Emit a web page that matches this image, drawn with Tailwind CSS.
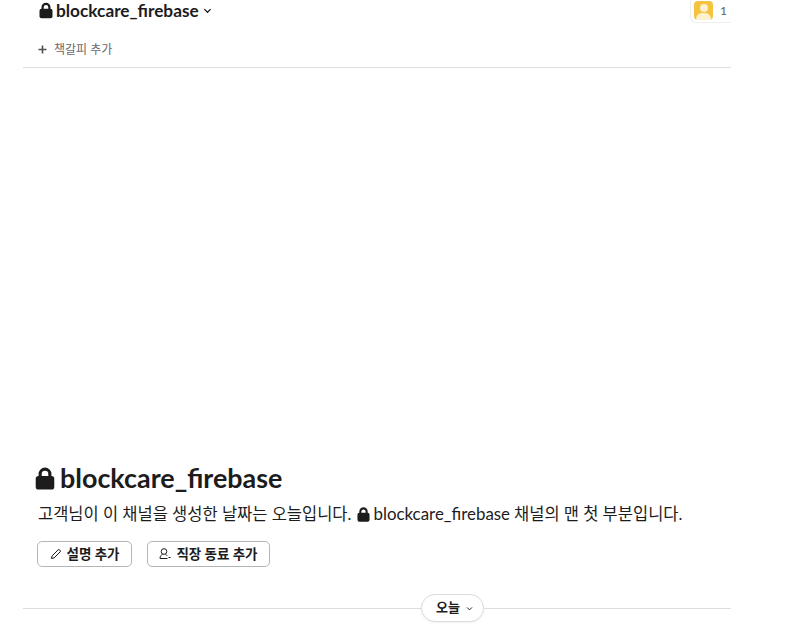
<!DOCTYPE html>
<html lang="ko">
<head>
    <meta charset="UTF-8">
    <title>blockcare_firebase</title>
    <script src="https://cdn.jsdelivr.net/npm/@tailwindcss/browser@4"></script>
</head>
<body class="bg-white h-[631px] overflow-hidden font-['Lato','Noto_Sans_CJK_KR',sans-serif] text-[#1d1c1d]">
    <div class="ml-[23px] w-[708px] h-[631px] flex flex-col">
        <!-- 채널 헤더 -->
        <div class="h-[23px] flex items-center justify-between pl-[16px]">
            <div class="flex items-center h-[21px] -mt-[2px]">
                <svg class="w-[14px] h-[17px] mr-[3px]" viewBox="0 0 14 16" fill="#1d1c1d">
                    <path d="M2.500 8V4.800a4.500 4.500 0 0 1 9 0V8H9.300V4.800a2.300 2.300 0 0 0-4.600 0V8z"/>
                    <rect x=".5" y="6.200" width="13" height="9.500" rx="2"/>
                </svg>
                <span class="text-[17.25px] leading-[21px] font-bold">blockcare_firebase</span>
                <svg class="w-[9px] h-[9px] ml-[4px]" viewBox="0 0 10 10" fill="none" stroke="#1d1c1d" stroke-width="1.400">
                    <path d="M1.500 3.500 5 7l3.500-3.500"/>
                </svg>
            </div>
            <div class="flex items-center h-[23px] pl-[3px] w-[41px] -mt-[1px] rounded-bl-[6px] border-l border-b border-[#efefef]">
                <div class="w-[19px] h-[19px] rounded-[4px] bg-[#f4c342] overflow-hidden flex flex-col items-center shrink-0">
                    <div class="w-[8px] h-[8px] rounded-full bg-[#fdf1d0] mt-[3px]"></div>
                    <div class="w-[15px] h-[8px] rounded-t-[6px] bg-[#fdf1d0] mt-[1px]"></div>
                </div>
                <span class="ml-[7px] text-[12px] text-[#616061]">1</span>
            </div>
        </div>
        <!-- 책갈피 바 -->
        <div class="h-[45px] flex items-center pl-[15px] border-b border-[#dddddd] pt-[9px]">
            <svg class="w-[9px] h-[9px] mr-[7px]" viewBox="0 0 9 9" fill="none" stroke="#505050" stroke-width="1.600">
                <path d="M4.500 .5v8M.5 4.500h8"/>
            </svg>
            <span class="text-[12px] leading-[16px] text-[#696969]">책갈피 추가</span>
        </div>

        <div class="flex-1"></div>

        <!-- 채널 소개 -->
        <div class="pl-[12px] flex flex-col items-start">
            <div class="flex items-center h-[28px]">
                <svg class="w-[20px] h-[23px] mr-[5px]" viewBox="0 0 14 16" fill="#1d1c1d">
                    <path d="M2.500 8V4.800a4.500 4.500 0 0 1 9 0V8H9.300V4.800a2.300 2.300 0 0 0-4.600 0V8z"/>
                    <rect x=".5" y="6.200" width="13" height="9.500" rx="2"/>
                </svg>
                <span class="text-[26.9px] leading-[28px] font-bold">blockcare_firebase</span>
            </div>
            <p class="mt-[11px] ml-[3px] flex items-center text-[16.5px] leading-[22px]">
                <span>고객님이 이 채널을 생성한 날짜는 오늘입니다.</span>
                <svg class="w-[13px] h-[15px] ml-[6px] mr-[3px]" viewBox="0 0 14 16" fill="#1d1c1d">
                    <path d="M2.500 8V4.800a4.500 4.500 0 0 1 9 0V8H9.300V4.800a2.300 2.300 0 0 0-4.600 0V8z"/>
                    <rect x=".5" y="6.200" width="13" height="9.500" rx="2"/>
                </svg>
                <span class="text-[16.9px]">blockcare_firebase</span>
                <span class="ml-[4px]">채널의 맨 첫 부분입니다.</span>
            </p>
            <div class="mt-[16px] ml-[2px] flex gap-[15px]">
                <button class="h-[26px] w-[95px] flex items-center justify-center rounded-[5px] border border-[#b5b5b5] bg-white text-[13.5px] font-bold">
                    <svg class="w-[12px] h-[12px] mr-[5px]" viewBox="0 0 12 12" fill="none" stroke="#1d1c1d" stroke-width="1">
                        <path d="M1.500 10.500l.6-2.600 6-6a1.100 1.100 0 0 1 1.600 0l.4.4a1.100 1.100 0 0 1 0 1.600l-6 6z"/>
                    </svg>
                    설명 추가
                </button>
                <button class="h-[26px] w-[123px] flex items-center justify-center rounded-[5px] border border-[#b5b5b5] bg-white text-[13.5px] font-bold">
                    <svg class="w-[12px] h-[12px] mr-[5px]" viewBox="0 0 12 12" fill="none" stroke="#1d1c1d" stroke-width="1">
                        <circle cx="5" cy="3.500" r="2.800"/>
                        <path d="M3.500 6.500C2 7 1 8 1 10.500h7.500M6.500 6.500c.8.300 1.300.7 1.700 1.300M9.500 9.500h2"/>
                    </svg>
                    직장 동료 추가
                </button>
            </div>
        </div>

        <!-- 날짜 구분선 -->
        <div class="mt-[27px] mb-[9px] h-[28px] flex items-center">
            <div class="w-[398px] h-px bg-[#dddddd]"></div>
            <div class="w-[63px] h-[28px] flex items-center justify-center pl-[4px] rounded-full border border-[#dddddd] bg-white text-[13px] font-bold shadow-[0_1px_2px_rgba(0,0,0,0.06)]">
                <span>오늘</span>
                <svg class="w-[7px] h-[7px] ml-[6px]" viewBox="0 0 10 10" fill="none" stroke="#1d1c1d" stroke-width="1.400">
                    <path d="M1.500 3.500 5 7l3.500-3.500"/>
                </svg>
            </div>
            <div class="flex-1 h-px bg-[#dddddd]"></div>
        </div>
    </div>
</body>
</html>
